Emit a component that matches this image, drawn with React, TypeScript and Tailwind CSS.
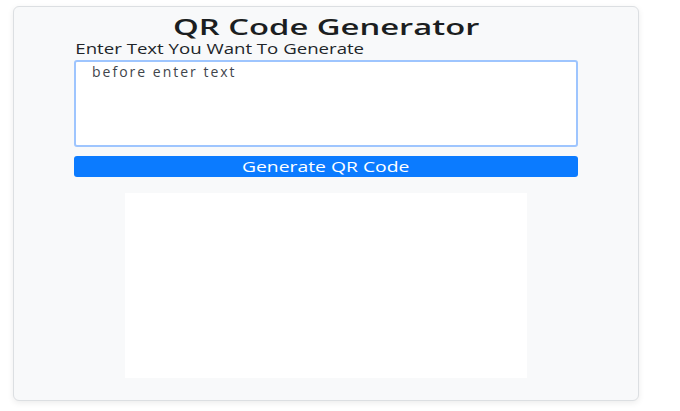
import React, { useState } from 'react';

export default function App() {
  const [text, setText] = useState('before enter text');

  return (
    <div className="min-h-screen bg-white pl-[13px] pt-[6px]" style={{ fontFamily: '"Open Sans", "Noto Sans", sans-serif' }}>
      <div className="flex h-[395px] w-[626px] flex-col items-center rounded-md border border-[#dcdfe2] bg-[#f8f9fa] px-[60px] pt-[7px] shadow-[0_2px_6px_rgba(0,0,0,0.08)]">
        <h1 className="h-[26px] text-center text-[21px] font-semibold leading-[26px] text-[#1b1e21]">
          <span className="inline-block origin-center scale-x-[1.56]">QR Code Generator</span>
        </h1>
        <label htmlFor="qr-text" className="block h-[18px] w-full text-[14px] leading-[18px] text-[#212529]">
          <span className="inline-block origin-left scale-x-[1.33] pl-[1px]">Enter Text You Want To Generate</span>
        </label>
        <textarea
          id="qr-text"
          value={text}
          onChange={e => setText(e.target.value)}
          className="mt-[2px] h-[87px] w-full resize-none rounded-[3px] border-2 border-[#9ec5fe] bg-white px-[16px] py-0 text-[14px] leading-[20px] tracking-[2px] text-[#3f454b] outline-none"
        />
        <button className="mt-[9px] h-[21px] w-full rounded-[3px] bg-[#0b7bff] text-[14px] leading-[21px] text-white">
          <span className="inline-block origin-center scale-x-[1.38]">Generate QR Code</span>
        </button>
        <div className="mt-[16px] h-[185px] w-[402px] bg-white" />
      </div>
    </div>
  );
}
